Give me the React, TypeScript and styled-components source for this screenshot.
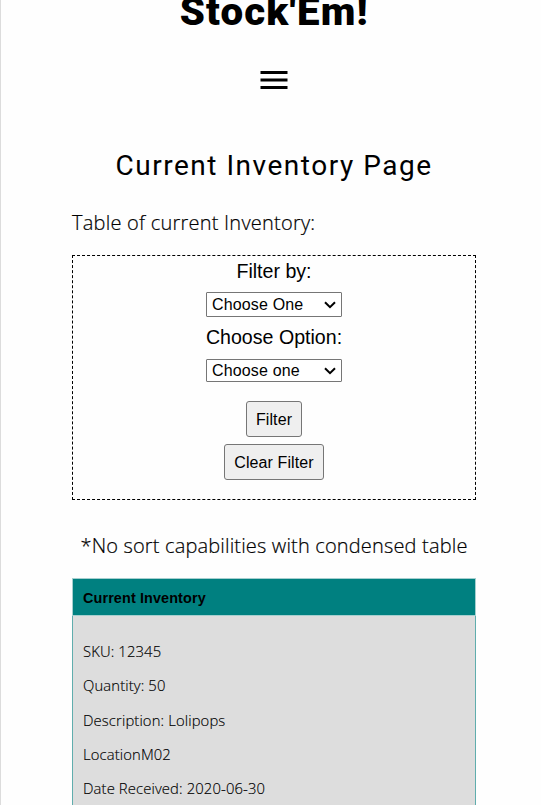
import React from "react";
import styled, { createGlobalStyle } from "styled-components";

const GlobalStyle = createGlobalStyle`
  *, *::before, *::after { box-sizing: border-box; }
  body { margin: 0; background: #fefefe; color: #000; overflow: hidden; }
`;

const Page = styled.div`
  height: 805px;
  overflow: hidden;
  border-left: 1px solid #dcdcdc;
  padding: 0 65px 0 71px;
  font-family: "Open Sans", sans-serif;
  font-weight: 300;
`;

const Header = styled.header`
  display: flex;
  flex-direction: column;
  align-items: center;
`;

const Brand = styled.div`
  height: 60px;
  margin-top: -18px;
  font: 900 38px/60px Roboto, sans-serif;
  letter-spacing: 1.1px;
  white-space: nowrap;
  transform: scaleX(1.06);
`;

const MenuButton = styled.button`
  display: flex;
  margin: 20px 1px 0 0;
  padding: 0;
  border: 0;
  background: none;
`;

const Title = styled.h1`
  margin: 48px 0 0;
  font: 400 28px/40px Roboto, sans-serif;
  letter-spacing: 1.52px;
  text-align: center;
  white-space: nowrap;
`;

const Text = styled.p<{ $top: number; $center?: boolean }>`
  margin: ${(p) => p.$top}px 0 0;
  font-size: 20px;
  line-height: 30px;
  letter-spacing: ${(p) => (p.$center ? 0.16 : 0.23)}px;
  text-align: ${(p) => (p.$center ? "center" : "left")};
  -webkit-text-stroke: 0.2px #000;
  white-space: nowrap;
`;

const FilterForm = styled.form`
  display: flex;
  flex-direction: column;
  align-items: center;
  height: 245px;
  margin-top: 17px;
  border: 1px dashed #000;
  font-family: "Liberation Sans", Arial, sans-serif;
  font-weight: 400;
`;

const Label = styled.label`
  height: 30px;
  font-size: 19.6px;
  line-height: 30px;
`;

const SelectBox = styled.div<{ $height: number; $top: number; $bottom: number }>`
  display: flex;
  align-items: center;
  width: 136px;
  height: ${(p) => p.$height}px;
  margin: ${(p) => p.$top}px 0 ${(p) => p.$bottom}px;
  padding-right: 5px;
  border: 1px solid #767676;
  border-radius: 1px;
  background: #fff;
`;

const Select = styled.select`
  appearance: none;
  flex: 1;
  min-width: 0;
  height: 20px;
  padding: 0 0 0 5px;
  border: 0;
  background: none;
  color: #000;
  font: 400 16px/20px "Liberation Sans", Arial, sans-serif;
  letter-spacing: 0.15px;
`;

const Button = styled.button<{ $width: number; $top: number }>`
  width: ${(p) => p.$width}px;
  height: 36px;
  margin-top: ${(p) => p.$top}px;
  padding: 0;
  border: 1px solid #767676;
  border-radius: 3px;
  background: #efefef;
  color: #000;
  font: 400 16px/33px "Liberation Sans", Arial, sans-serif;
  letter-spacing: 0.1px;
  white-space: nowrap;
`;

const Table = styled.section`
  margin-top: 17px;
`;

const TableHead = styled.div`
  height: 38px;
  padding-left: 10px;
  border: 1px solid #a6cfcf;
  background: #008080;
  font: 700 14.4px/38px "Liberation Sans", Arial, sans-serif;
  letter-spacing: 0.12px;
`;

const TableCell = styled.div`
  height: 260px;
  padding: 24px 0 0 10px;
  border: solid #60adad;
  border-width: 0 1px;
  background: #ddd;
`;

const Entry = styled.p`
  height: 34.3px;
  margin: 0;
  font-size: 14.8px;
  line-height: 22px;
  letter-spacing: 0.13px;
  -webkit-text-stroke: 0.15px #000;
`;

const Chevron = () => (
  <svg width="12" height="8" viewBox="0 0 12 8" fill="none" stroke="#000" strokeWidth="2">
    <path d="M1 1.2 6 6.2 11 1.2" />
  </svg>
);

const entries = [
  "SKU: 12345",
  "Quantity: 50",
  "Description: Lolipops",
  "LocationM02",
  "Date Received: 2020-06-30",
];

export default function App() {
  return (
    <>
      <GlobalStyle />
      <Page>
        <Header>
          <Brand>Stock'Em!</Brand>
          <MenuButton aria-label="Menu">
            <svg width="36" height="36" viewBox="0 0 24 24">
              <path d="M3 18h18v-2H3v2zm0-5h18v-2H3v2zm0-7v2h18V6H3z" />
            </svg>
          </MenuButton>
        </Header>
        <Title>Current Inventory Page</Title>
        <Text $top={22}>Table of current Inventory:</Text>
        <FilterForm>
          <Label htmlFor="filter">Filter by:</Label>
          <SelectBox $height={25} $top={6} $bottom={5}>
            <Select id="filter">
              <option>Choose One</option>
            </Select>
            <Chevron />
          </SelectBox>
          <Label htmlFor="option">Choose Option:</Label>
          <SelectBox $height={23} $top={7} $bottom={0}>
            <Select id="option">
              <option>Choose one</option>
            </Select>
            <Chevron />
          </SelectBox>
          <Button type="button" $width={56} $top={19}>Filter</Button>
          <Button type="button" $width={100} $top={7}>Clear Filter</Button>
        </FilterForm>
        <Text $top={31} $center>*No sort capabilities with condensed table</Text>
        <Table>
          <TableHead>Current Inventory</TableHead>
          <TableCell>
            {entries.map((entry) => (
              <Entry key={entry}>{entry}</Entry>
            ))}
          </TableCell>
        </Table>
      </Page>
    </>
  );
}
